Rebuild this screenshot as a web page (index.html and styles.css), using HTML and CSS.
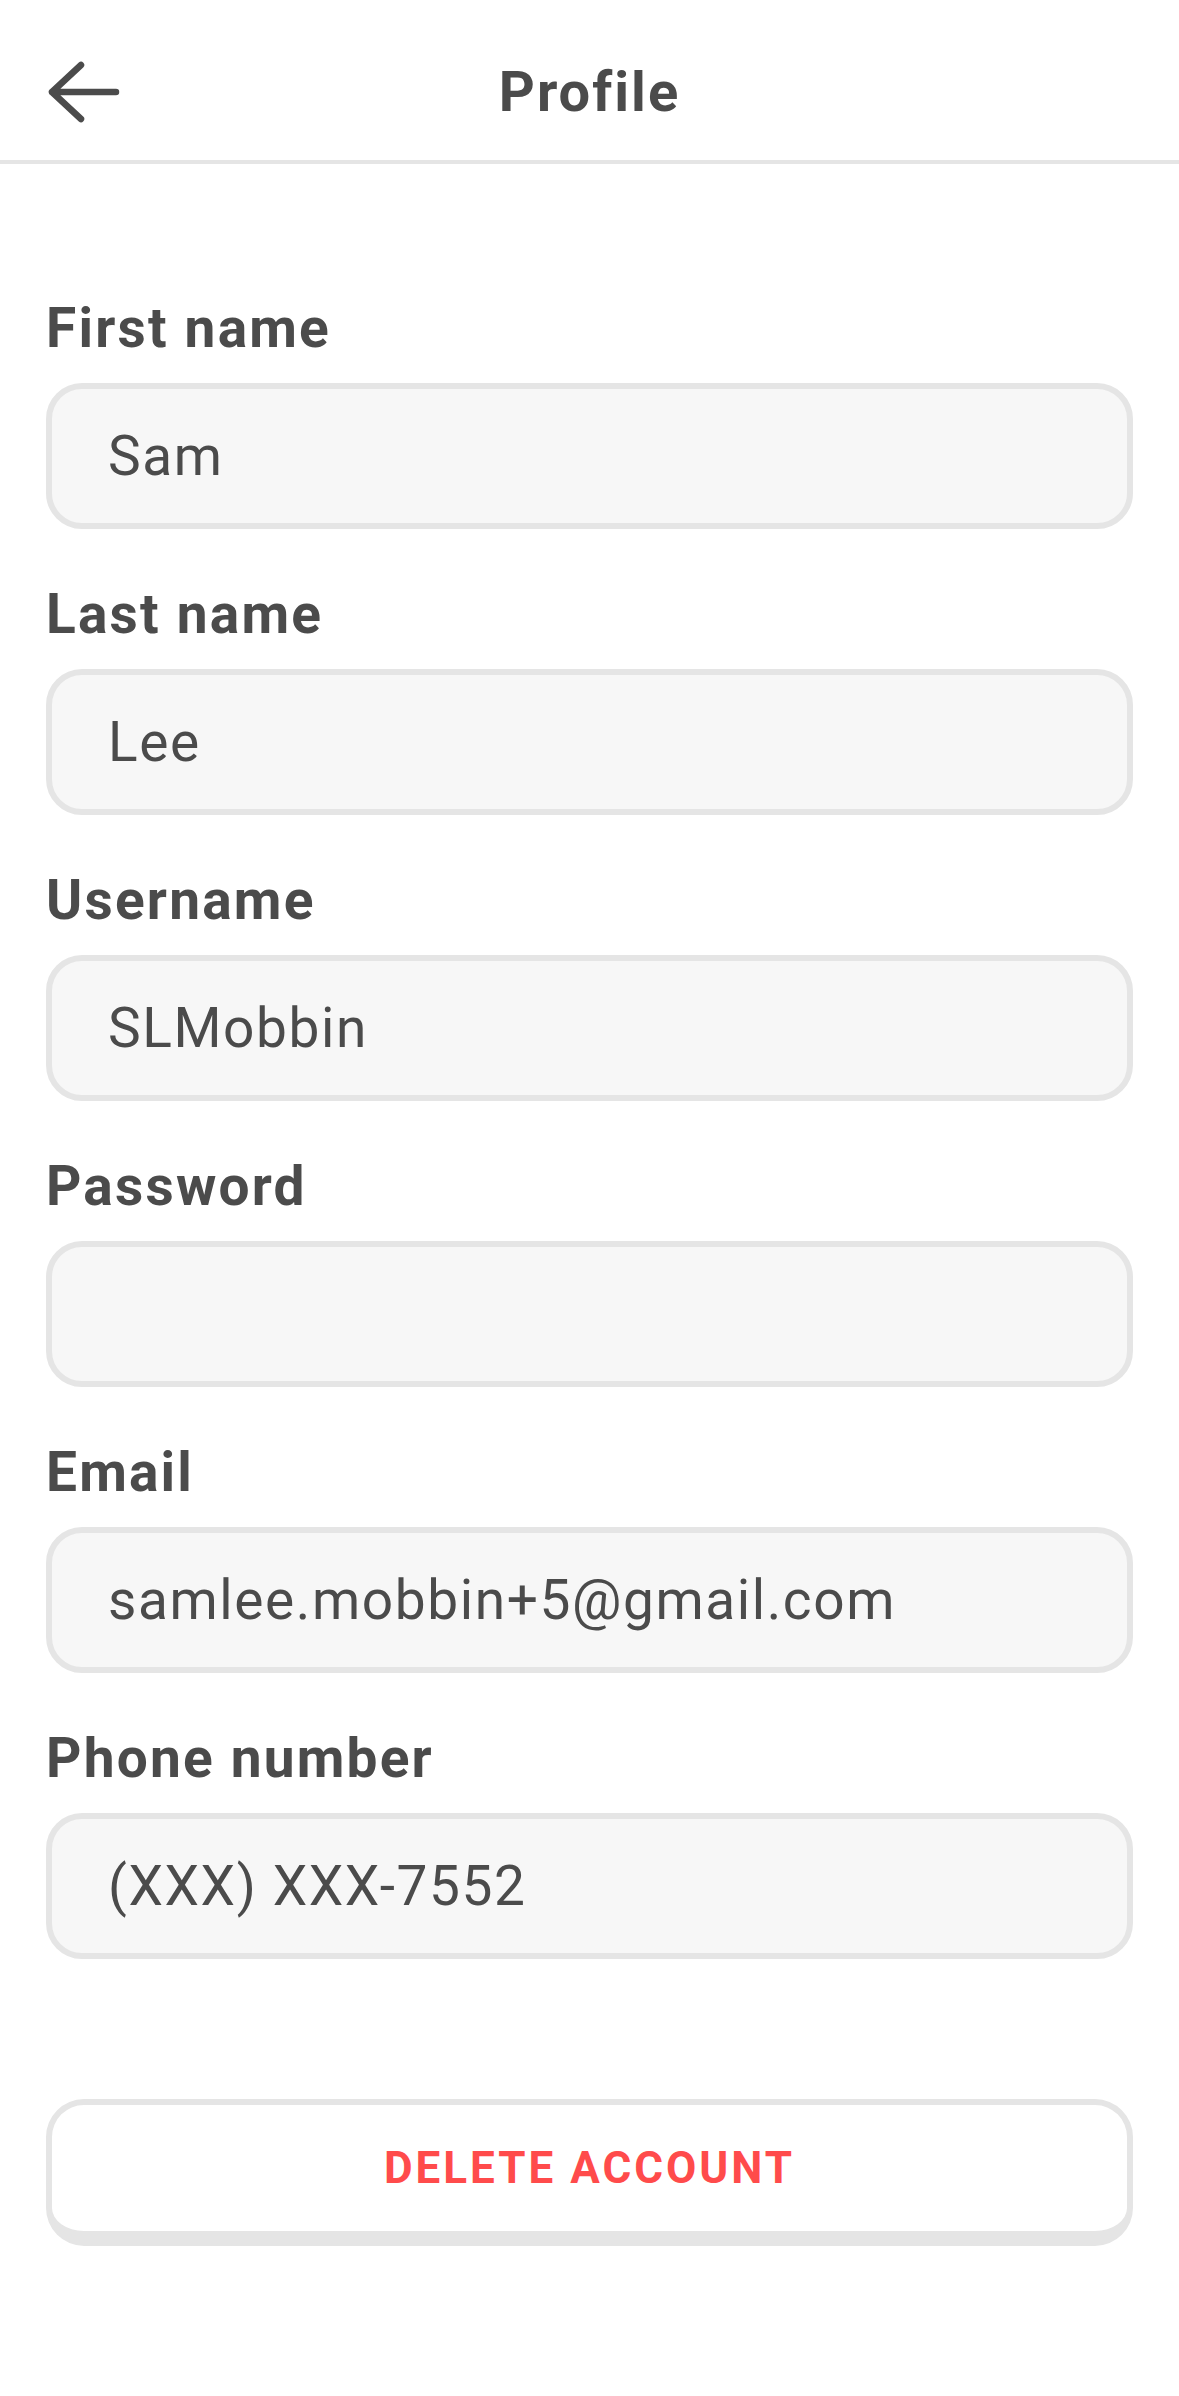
FILE: index.html
```html
<!DOCTYPE html>
<html lang="en">
<head>
  <meta charset="UTF-8">
  <title>Profile</title>
  <link rel="stylesheet" href="styles.css">
</head>
<body>
  <header class="topbar">
    <button class="backbtn" type="button" aria-label="Back">
      <svg width="80" height="64" viewBox="0 0 80 64">
        <path d="M72 32 H8 M37 5 L8 32 L37 59" fill="none" stroke="#4b4b4b" stroke-width="6.5" stroke-linecap="round" stroke-linejoin="round"/>
      </svg>
    </button>
    <h1 class="title">Profile</h1>
  </header>

  <form class="profileform" onsubmit="return false;">
    <label class="fieldlabel" for="FirstName">First name</label>
    <input class="fieldinput" type="text" id="FirstName" value="Sam">

    <label class="fieldlabel" for="LastName">Last name</label>
    <input class="fieldinput" type="text" id="LastName" value="Lee">

    <label class="fieldlabel" for="Username">Username</label>
    <input class="fieldinput" type="text" id="Username" value="SLMobbin">

    <label class="fieldlabel" for="Password">Password</label>
    <input class="fieldinput" type="password" id="Password">

    <label class="fieldlabel" for="Email">Email</label>
    <input class="fieldinput" type="text" id="Email" value="samlee.mobbin+5@gmail.com">

    <label class="fieldlabel" for="Phone">Phone number</label>
    <input class="fieldinput" type="text" id="Phone" value="(XXX) XXX-7552">

    <button class="deletebtn" type="button">Delete account</button>
  </form>
</body>
</html>
```

FILE: styles.css
```css
body {
  margin: 0;
  font-family: Roboto, "Liberation Sans", sans-serif;
  color: #4b4b4b;
  background: #fff;
}

.topbar {
  position: relative;
  height: 136px;
  padding-top: 24px;
  border-bottom: 4px solid #e5e5e5;
  display: flex;
  align-items: center;
  justify-content: center;
}

.backbtn {
  position: absolute;
  left: 44px;
  top: 60px;
  padding: 0;
  border: none;
  background: none;
  line-height: 0;
}

.title {
  margin: 0;
  font-size: 56px;
  font-weight: 700;
  letter-spacing: 2px;
}

.profileform {
  display: flex;
  flex-direction: column;
  padding: 132px 46px 0;
}

.fieldlabel {
  font-size: 55px;
  font-weight: 700;
  line-height: 65px;
  letter-spacing: 2.2px;
  margin-bottom: 22px;
}

.fieldinput {
  box-sizing: border-box;
  height: 146px;
  margin: 0 0 53px;
  padding: 0 56px;
  border: 6px solid #e5e5e5;
  border-radius: 36px;
  background: #f7f7f7;
  font: inherit;
  font-size: 55px;
  letter-spacing: 1.6px;
  color: #4b4b4b;
  outline: none;
}

.deletebtn {
  box-sizing: border-box;
  height: 147px;
  margin-top: 87px;
  border: 6px solid #e5e5e5;
  border-bottom-width: 15px;
  border-radius: 38px;
  background: #fff;
  font: inherit;
  font-size: 44px;
  font-weight: 700;
  letter-spacing: 3px;
  text-transform: uppercase;
  color: #ff4b4b;
}
```
